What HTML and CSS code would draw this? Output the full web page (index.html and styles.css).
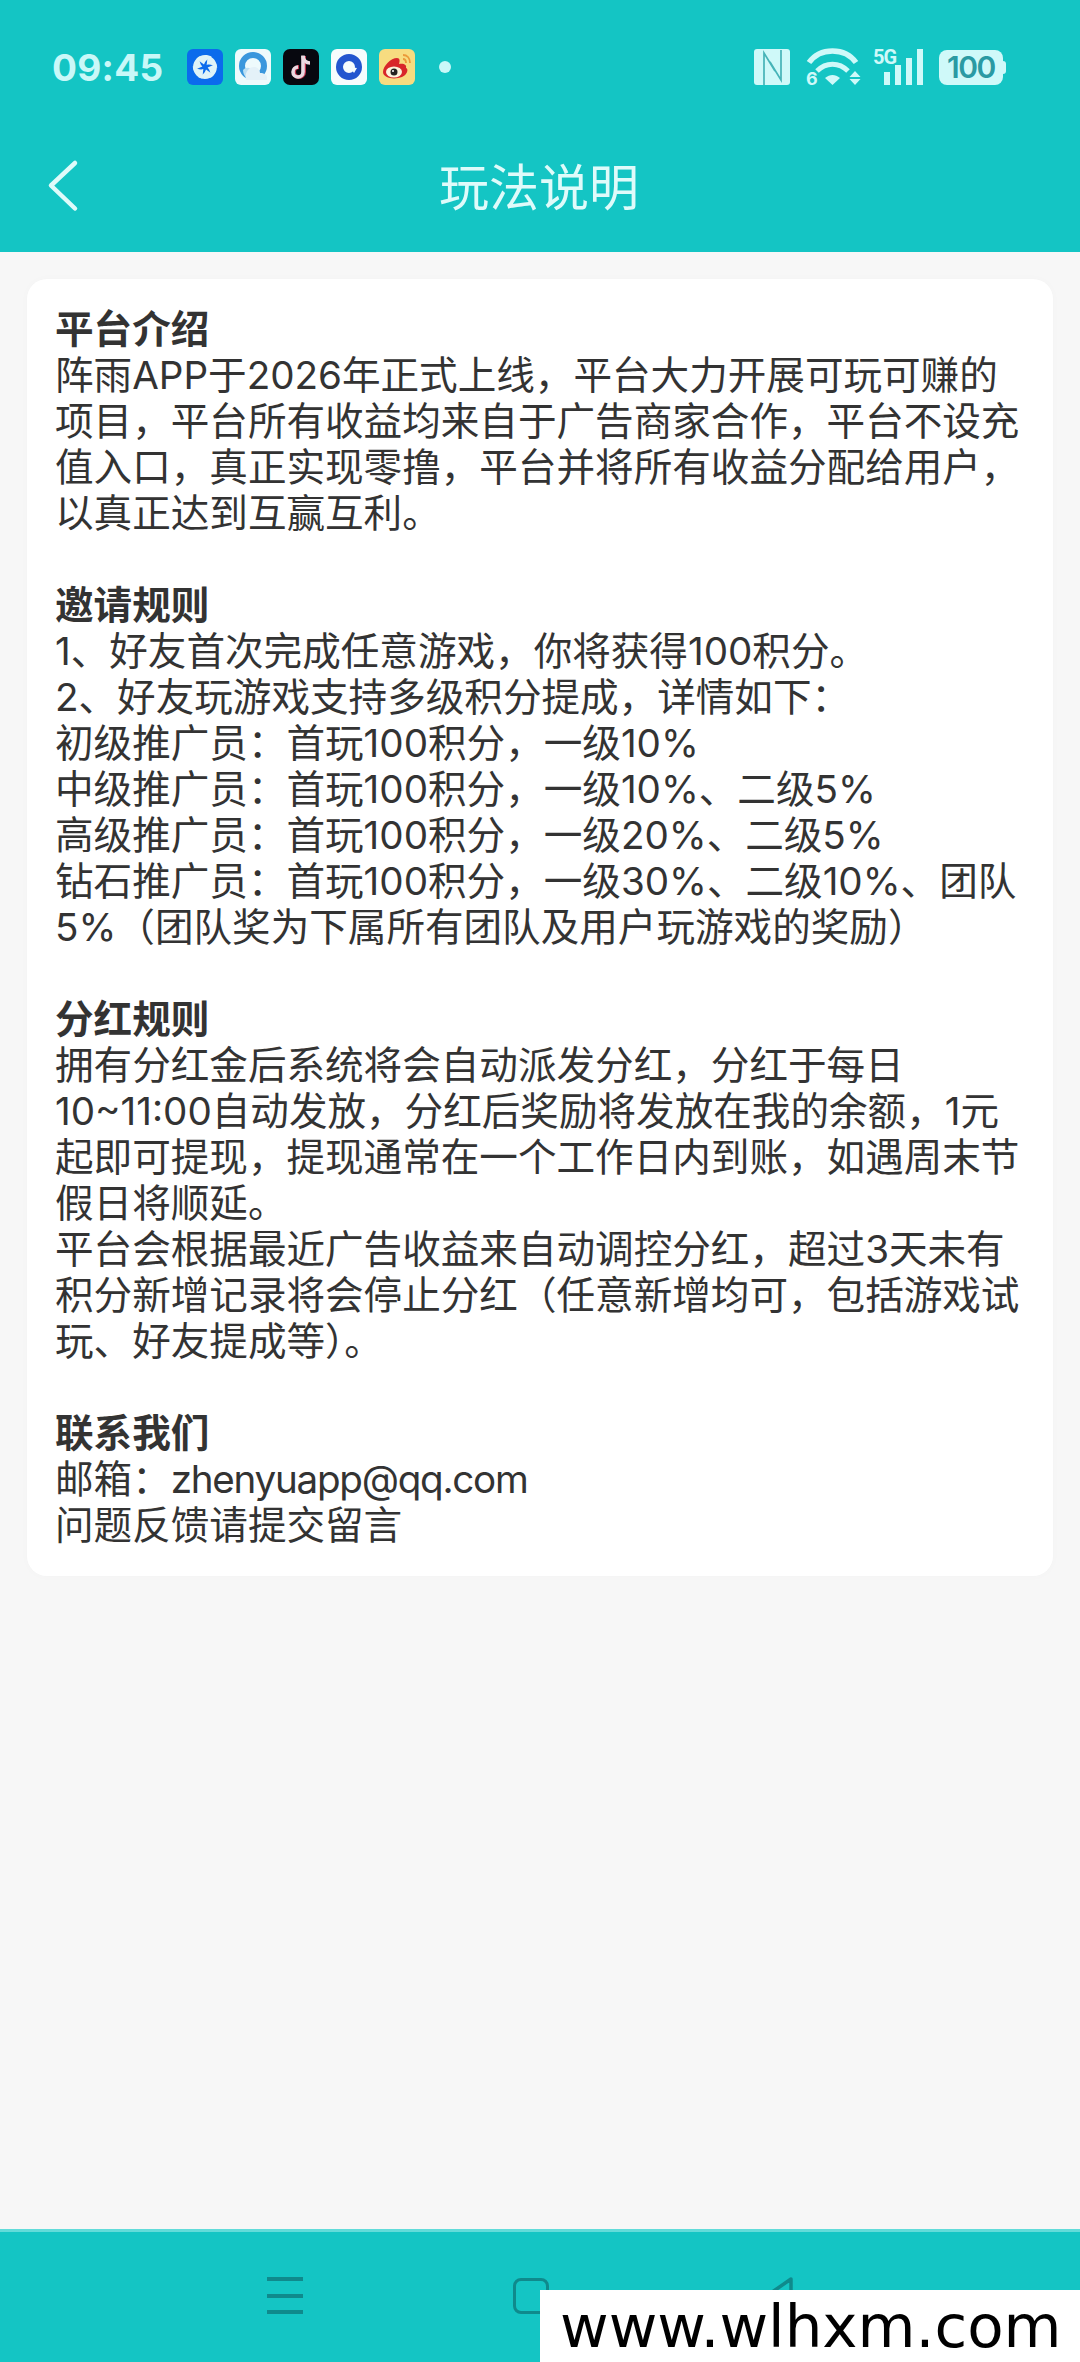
FILE: index.html
```html
<!DOCTYPE html>
<html lang="zh-CN">
<head>
<meta charset="utf-8">
<title>玩法说明</title>
<link rel="stylesheet" href="styles.css">
</head>
<body>
<div class="app">
  <div class="top">
    <div class="status">
      <span class="time">09:45</span>
      <div class="apps">
        <svg class="tile" viewBox="0 0 36 36"><rect width="36" height="36" rx="6" fill="#0b6bec"/><g fill="#dff3f8"><path d="M17 15.500L9.500 10C13 5.500 20 5 25 8C21 9.500 18 12 17 15.500z"/><path d="M17 15.500L9.500 10C13 5.500 20 5 25 8C21 9.500 18 12 17 15.500z" transform="rotate(60 18 18)"/><path d="M17 15.500L9.500 10C13 5.500 20 5 25 8C21 9.500 18 12 17 15.500z" transform="rotate(120 18 18)"/><path d="M17 15.500L9.500 10C13 5.500 20 5 25 8C21 9.500 18 12 17 15.500z" transform="rotate(180 18 18)"/><path d="M17 15.500L9.500 10C13 5.500 20 5 25 8C21 9.500 18 12 17 15.500z" transform="rotate(240 18 18)"/><path d="M17 15.500L9.500 10C13 5.500 20 5 25 8C21 9.500 18 12 17 15.500z" transform="rotate(300 18 18)"/></g></svg>
        <svg class="tile" viewBox="0 0 36 36"><rect width="36" height="36" rx="6" fill="#eefafc"/><circle cx="18" cy="17" r="11" fill="none" stroke="#3a97dd" stroke-width="6"/><path d="M8 21c0 4 2 7 5 9h6V22c-4-4-8-4-11-1z" fill="#bcdff3"/><path d="M11 31c-2-7 3-14 9-13 4 1 5 4 5 6 4 0 7 2 7 4v3z" fill="#e4f1f8"/></svg>
        <svg class="tile" viewBox="0 0 36 36"><rect width="36" height="36" rx="7" fill="#07080f"/><path d="M21 7v16a5 5 0 1 1-5-5" fill="none" stroke="#c2344f" stroke-width="4"/><path d="M20 6.500v16.500a5 5 0 1 1-5-5" fill="none" stroke="#ead9e1" stroke-width="3.600"/><path d="M20 7c0 4 3 7 7 7" fill="none" stroke="#ead9e1" stroke-width="3.600"/></svg>
        <svg class="tile" viewBox="0 0 36 36"><rect width="36" height="36" rx="6" fill="#f6fcfd"/><circle cx="18" cy="18" r="9.500" fill="none" stroke="#2356cf" stroke-width="7"/><path d="M19 18l7 1-3 5z" fill="#f6fcfd"/></svg>
        <svg class="tile" viewBox="0 0 36 36"><rect width="36" height="36" rx="6" fill="#f7dc80"/><path d="M4 23c0-6 8-14 14-14 3 0 3 3 2 6 5-1 8 1 7 4 3 1 1 7-4 9-8 3-19 1-19-5z" fill="#d8262a"/><ellipse cx="15" cy="23" rx="8" ry="5.500" fill="#fbf3dc"/><circle cx="15" cy="23" r="3.500" fill="#222"/><circle cx="14" cy="22" r="1" fill="#fff"/><path d="M24 6c4 0 7 3 7 8M24 10c2 0 3 2 3 4" fill="none" stroke="#eb9a3a" stroke-width="1.800"/></svg>
      </div>
      <span class="dot"></span>
      <div class="sys">
        <svg class="nfc" viewBox="0 0 36 36"><rect width="36" height="36" rx="3" fill="#cff9f9"/><path d="M10 36V4l11 18M27 1v30L16 13" fill="none" stroke="#46b4b8" stroke-width="1.700"/></svg>
        <svg class="wifi" viewBox="0 0 54 36"><path d="M3 13.500C14 -2 39 -2 50 13.500" fill="none" stroke="#cff9f9" stroke-width="5.500"/><path d="M11 22c9-9 22-9 31 0" fill="none" stroke="#cff9f9" stroke-width="5"/><path d="M19 29c5-4 10-4 15 0l-7.500 7z" fill="#cff9f9"/><path d="M49 22l5.500 6h-11zM43.500 30h11l-5.500 6z" fill="#cff9f9"/><text x="0" y="36" class="wifi6">6</text></svg>
        <svg class="signal" viewBox="0 0 50 36"><text x="-1" y="15" class="fiveg">5G</text><rect x="10" y="23" width="6" height="13" fill="#cff9f9"/><rect x="21" y="16" width="6" height="20" fill="#cff9f9"/><rect x="32" y="9" width="6" height="27" fill="#cff9f9"/><rect x="43" y="0" width="6" height="36" fill="#cff9f9"/></svg>
        <div class="batt"><span class="battnum">100</span></div>
      </div>
    </div>
    <div class="bar">
      <svg class="back" viewBox="0 0 30 52"><path d="M27 3L3 25.500l24 23" fill="none" stroke="#dffbfa" stroke-width="4.500" stroke-linecap="round" stroke-linejoin="round"/></svg>
      <h1 class="title">玩法说明</h1>
    </div>
  </div>
  <main class="body">
    <section class="card">
      <h2>平台介绍</h2>
      <p>阵雨APP于2026年正式上线，平台大力开展可玩可赚的项目，平台所有收益均来自于广告商家合作，平台不设充值入口，真正实现零撸，平台并将所有收益分配给用户，以真正达到互赢互利。</p>
      <h2 class="gap">邀请规则</h2>
      <p>1、好友首次完成任意游戏，你将获得100积分。</p>
      <p>2、好友玩游戏支持多级积分提成，详情如下：</p>
      <p>初级推广员：首玩100积分，一级10%</p>
      <p>中级推广员：首玩100积分，一级10%、二级5%</p>
      <p>高级推广员：首玩100积分，一级20%、二级5%</p>
      <p>钻石推广员：首玩100积分，一级30%、二级10%、团队5%（团队奖为下属所有团队及用户玩游戏的奖励）</p>
      <h2 class="gap">分红规则</h2>
      <p>拥有分红金后系统将会自动派发分红，分红于每日10~11:00自动发放，分红后奖励将发放在我的余额，1元起即可提现，提现通常在一个工作日内到账，如遇周末节假日将顺延。</p>
      <p>平台会根据最近广告收益来自动调控分红，超过3天未有积分新增记录将会停止分红（任意新增均可，包括游戏试玩、好友提成等）。</p>
      <h2 class="gap">联系我们</h2>
      <p>邮箱：<span class="email">zhenyuapp@qq.com</span></p>
      <p>问题反馈请提交留言</p>
    </section>
  </main>
  <nav class="nav">
    <div class="menu"><i></i><i></i><i></i></div>
    <div class="home"></div>
    <svg class="tri" viewBox="0 0 34 40"><path d="M30 3L4 21l26 17z" fill="none" stroke="#0f8a8c" stroke-width="3.500" stroke-linejoin="round"/></svg>
  </nav>
  <div class="mark">www.wlhxm.com</div>
</div>
</body>
</html>
```
FILE: styles.css
```css
* { box-sizing: border-box; }
html, body { margin: 0; padding: 0; }
body { width: 1080px; height: 2362px; font-family: Inter, "Noto Sans CJK SC", sans-serif; background: #f7f7f7; overflow: hidden; }
svg { overflow: visible; }
.app { position: relative; width: 1080px; height: 2362px; display: flex; flex-direction: column; }
.top { height: 252px; background: #14c5c4; flex: none; }
.status { display: flex; align-items: center; height: 134px; padding: 0 77px 0 52px; }
.time { width: 135px; font: 700 37px/1 Inter, sans-serif; letter-spacing: .3px; color: #c9f8f8; }
.apps { display: flex; gap: 12px; }
.tile { display: block; width: 36px; height: 36px; }
.dot { width: 12px; height: 12px; border-radius: 50%; background: #c9f8f8; margin-left: 24px; }
.sys { margin-left: auto; display: flex; align-items: center; }
.nfc { width: 36px; height: 36px; display: block; }
.wifi { width: 54px; height: 36px; display: block; margin-left: 16px; }
.wifi6 { font: 700 18px Inter, sans-serif; fill: #cff9f9; }
.signal { width: 50px; height: 36px; display: block; margin-left: 14px; }
.fiveg { font: 700 20px "Roboto", sans-serif; fill: #cff9f9; letter-spacing: -1px; }
.batt { position: relative; margin-left: 15px; width: 64px; height: 35px; border-radius: 8px; background: #cff9f9; display: flex; align-items: center; justify-content: center; }
.batt::after { content: ""; position: absolute; right: -3px; top: 11px; width: 3px; height: 13px; border-radius: 0 3px 3px 0; background: #cff9f9; }
.battnum { font: 600 30px/1 Inter, sans-serif; color: #2a9aa3; letter-spacing: -1.500px; }
.bar { position: relative; height: 118px; display: flex; align-items: center; justify-content: center; }
.back { position: absolute; left: 48px; top: 26px; width: 30px; height: 52px; }
.title { margin: -18px 2px 0 0; font: 400 50px/1 "Noto Sans CJK SC", sans-serif; color: #dffbfa; }
.body { flex: 1; padding: 27px 27px 0; }
.card { background: #fff; border-radius: 20px; padding: 27px 28px 28px; font-size: 38.600px; line-height: 46px; color: #333; box-shadow: 0 0 10px rgba(0,0,0,.02); }
.card h2 { margin: 0; font-size: inherit; line-height: inherit; font-weight: 700; }
.card h2.gap { margin-top: 46px; }
.card p { margin: 0; }
.email { letter-spacing: -1.250px; }
.nav { position: relative; flex: none; height: 133px; background: #14c5c4; border-top: 3px solid #62dbd9; }
.menu { position: absolute; left: 267px; top: 45px; width: 36px; display: flex; flex-direction: column; gap: 12.500px; }
.menu i { display: block; height: 4px; background: #0f8a8c; }
.home { position: absolute; left: 513px; top: 46px; width: 36px; height: 36px; border: 3.500px solid #0f8a8c; border-radius: 8px; }
.tri { position: absolute; left: 761px; top: 44px; width: 34px; height: 40px; }
.mark { position: absolute; left: 540px; right: 0; bottom: 0; height: 72px; background: #fff; color: #000; font: 400 59.500px/72px "DejaVu Sans", sans-serif; padding: 1px 0 0 20px; white-space: nowrap; }
```
